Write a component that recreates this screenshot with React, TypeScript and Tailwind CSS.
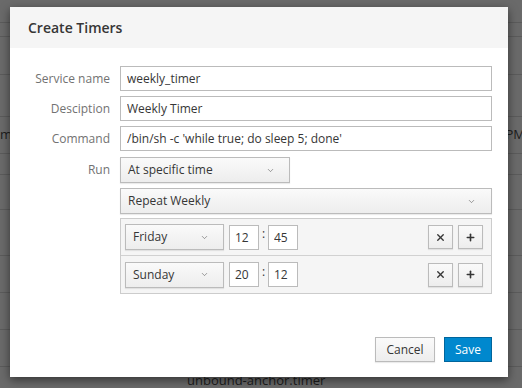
import { X, Plus, ChevronDown } from 'lucide-react';

const BG_ROWS = [23, 14, 38, 42, 37, 21, 35, 46, 37, 37, 37, 30];

function Select({ label, className }: { label: string; className: string }) {
  return (
    <div
      className={`flex items-center justify-between border border-[#bbb] bg-gradient-to-b from-[#fafafa] to-[#ededed] text-[12px] text-[#363636] shadow-[0_1px_1px_rgba(3,3,3,0.08)] ${className}`}
    >
      <span>{label}</span>
      <ChevronDown className="w-[9px] h-[9px] text-[#555]" strokeWidth={1.5} />
    </div>
  );
}

function IconButton({ children }: { children: React.ReactNode }) {
  return (
    <button className="w-[25px] h-[24px] flex items-center justify-center border border-[#bbb] bg-gradient-to-b from-[#fafafa] to-[#ededed] text-[#363636] shadow-[0_1px_1px_rgba(3,3,3,0.08)]">
      {children}
    </button>
  );
}

function TimerRow({ day, hour, minute, last }: { day: string; hour: string; minute: string; last?: boolean }) {
  return (
    <div className={`h-[37px] flex items-center pl-[4px] pr-[8px] ${last ? '' : 'border-b border-[#d1d1d1]'}`}>
      <Select label={day} className="w-[99px] h-[26px] pl-[7px] pr-[14px]" />
      <input
        value={hour}
        readOnly
        className="ml-[5px] w-[30px] h-[25px] border border-[#bbb] bg-white px-[5px] text-[12px] text-[#363636] outline-none"
      />
      <span className="w-[9px] text-center text-[12px] text-[#363636] -mt-[6px]">:</span>
      <input
        value={minute}
        readOnly
        className="w-[30px] h-[25px] border border-[#bbb] bg-white px-[5px] text-[12px] text-[#363636] outline-none"
      />
      <div className="ml-auto flex gap-[5px]">
        <IconButton>
          <X className="w-[11px] h-[11px]" strokeWidth={3} />
        </IconButton>
        <IconButton>
          <Plus className="w-[11px] h-[11px]" strokeWidth={3.5} />
        </IconButton>
      </div>
    </div>
  );
}

function Field({ label, value }: { label: string; value: string }) {
  return (
    <div className="flex items-center">
      <label className="w-[100px] text-right text-[12px] text-[#727272]">{label}</label>
      <input
        value={value}
        readOnly
        className="ml-[10px] flex-1 h-[25px] border border-[#bbb] bg-white px-[6px] text-[12px] text-[#363636] outline-none"
      />
    </div>
  );
}

export default function App() {
  return (
    <div className="relative w-[522px] h-[388px] overflow-hidden bg-[#6a6a6a] font-['Open_Sans',sans-serif]">
      {/* dimmed page behind the dialog */}
      <div className="flex flex-col">
        {BG_ROWS.map((h, i) => (
          <div
            key={i}
            style={{ height: h }}
            className="relative shrink-0 border-b border-[#5b5b5b] text-[13px] text-[#1c1c1c]"
          >
            {i === 4 && (
              <>
                <span className="absolute left-[0px] top-[8px] whitespace-nowrap">mer</span>
                <span className="absolute right-[-3px] top-[8px] whitespace-nowrap">12:00 PM</span>
              </>
            )}
            {i === 11 && <span className="absolute left-[187px] top-[4px]">unbound-anchor.timer</span>}
          </div>
        ))}
      </div>

      <div className="absolute left-[10px] top-[7px] w-[498px] h-[370px] bg-white flex flex-col shadow-[0_3px_9px_rgba(0,0,0,0.5)]">
        <div className="h-[41px] bg-[#f5f5f5] px-[18px] flex items-center">
          <h4 className="text-[14px] font-semibold text-[#363636]">Create Timers</h4>
        </div>

        <div className="pt-[18px] pr-[16px] flex flex-col">
          <div className="flex flex-col gap-[5px]">
            <Field label="Service name" value="weekly_timer" />
            <Field label="Desciption" value="Weekly Timer" />
            <Field label="Command" value="/bin/sh -c 'while true; do sleep 5; done'" />
          </div>
          <div className="flex items-center mt-[6px]">
            <label className="w-[100px] text-right text-[12px] text-[#727272]">Run</label>
            <Select label="At specific time" className="ml-[10px] w-[170px] h-[26px] pl-[7px] pr-[14px]" />
          </div>
          <div className="ml-[110px] mt-[5px]">
            <Select label="Repeat Weekly" className="h-[26px] pl-[7px] pr-[15px]" />
          </div>
          <div className="ml-[110px] mt-[4px] border border-[#ccc] bg-[#f5f5f5]">
            <TimerRow day="Friday" hour="12" minute="45" />
            <TimerRow day="Sunday" hour="20" minute="12" last />
          </div>
        </div>

        <div className="mt-auto pb-[15px] pr-[16px] flex justify-end gap-[9px]">
          <button className="w-[60px] h-[25px] border border-[#bbb] bg-gradient-to-b from-[#fafafa] to-[#ededed] text-[12px] text-[#363636] shadow-[0_1px_1px_rgba(3,3,3,0.08)]">
            Cancel
          </button>
          <button className="w-[48px] h-[25px] border border-[#00659c] bg-[#0088ce] text-[12px] text-white">
            Save
          </button>
        </div>
      </div>
    </div>
  );
}
